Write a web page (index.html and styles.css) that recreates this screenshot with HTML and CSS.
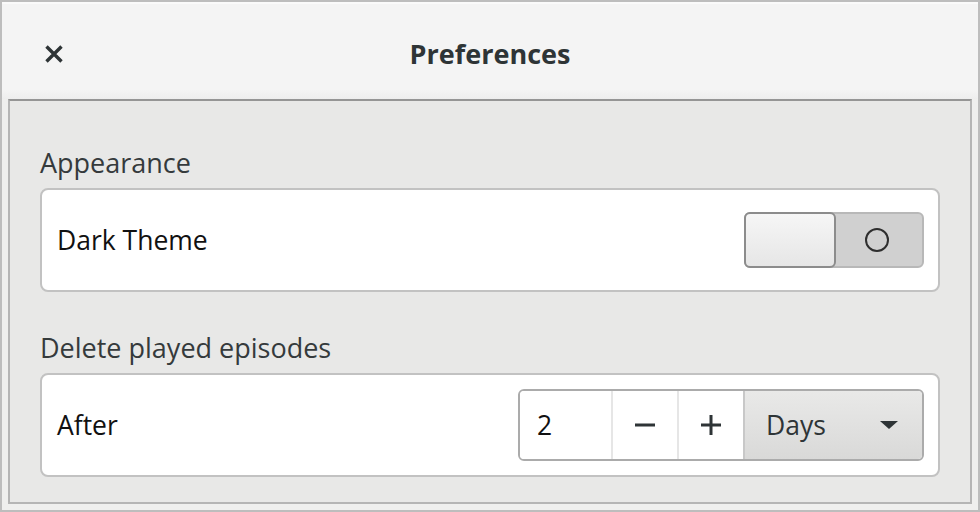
FILE: index.html
```html
<!DOCTYPE html>
<html>
<head>
<meta charset="utf-8">
<link rel="stylesheet" href="styles.css">
</head>
<body>
<div class="window">
  <header class="headerbar">
    <button class="close" aria-label="Close">
      <svg width="20" height="20" viewBox="0 0 20 20"><path d="M2.5 2.5 L17.5 17.5 M17.5 2.5 L2.5 17.5" stroke="#2e3436" stroke-width="3.4" stroke-linecap="butt" fill="none"/></svg>
    </button>
    <div class="title">Preferences</div>
  </header>
  <main class="frame">
    <section class="group">
      <h2 class="group-title">Appearance</h2>
      <div class="card">
        <span class="row-label">Dark Theme</span>
        <div class="switch">
          <div class="slider"></div>
          <div class="off-side"><span class="ring"></span></div>
        </div>
      </div>
    </section>
    <section class="group">
      <h2 class="group-title">Delete played episodes</h2>
      <div class="card">
        <span class="row-label">After</span>
        <div class="linked">
          <div class="spin-entry">2</div>
          <div class="spin-btn">
            <svg width="22" height="22" viewBox="0 0 22 22"><rect x="1" y="9.5" width="20" height="3" fill="#2e3436"/></svg>
          </div>
          <div class="spin-btn">
            <svg width="22" height="22" viewBox="0 0 22 22"><rect x="1" y="9.5" width="20" height="3" fill="#2e3436"/><rect x="9.5" y="1" width="3" height="20" fill="#2e3436"/></svg>
          </div>
          <div class="combo">
            <span>Days</span>
            <svg width="20" height="10" viewBox="0 0 20 10"><path d="M1 1 L19 1 L10 9 Z" fill="#2e3436"/></svg>
          </div>
        </div>
      </div>
    </section>
  </main>
</div>
</body>
</html>
```
FILE: styles.css
```css
* { box-sizing: border-box; }
html, body { margin: 0; padding: 0; }
body {
  width: 980px;
  height: 512px;
  font-family: "Open Sans", "Noto Sans", sans-serif;
  color: #2e3436;
  overflow: hidden;
}
.window {
  width: 980px;
  height: 512px;
  border: 2px solid #bdbdbd;
  background: #efefee;
  display: flex;
  flex-direction: column;
}
.headerbar {
  height: 97px;
  flex: none;
  display: flex;
  align-items: center;
  justify-content: center;
  position: relative;
  background: linear-gradient(#f4f4f4 0, #f4f4f4 86px, #ececec 97px);
  border-top: 2px solid #fafafa;
}
.close {
  position: absolute;
  left: 34px;
  top: 32px;
  width: 36px;
  height: 36px;
  border: none;
  background: transparent;
  padding: 0;
  display: flex;
  align-items: center;
  justify-content: center;
}
.title {
  font-weight: 700;
  font-size: 27px;
  color: #2e3436;
  margin-top: 4px;
}
.frame {
  margin: 0 6px;
  height: 405px;
  flex: none;
  background: #e8e8e7;
  border: 2px solid #b5b5b5;
  border-top-color: #959595;
  padding: 40px 30px 0;
  display: flex;
  flex-direction: column;
  gap: 34px;
}
.group-title {
  margin: 0 0 6px;
  padding-top: 3px;
  font-weight: 400;
  font-size: 27px;
  line-height: 38px;
  color: #353a3c;
}
.card {
  height: 104px;
  background: #fff;
  border: 2px solid #c2c2c2;
  border-radius: 8px;
  display: flex;
  align-items: center;
  justify-content: space-between;
  padding: 0 14px 0 15px;
}
.row-label {
  font-size: 26.5px;
  color: #111;
}
.switch {
  width: 180px;
  height: 56px;
  display: flex;
  border: 2px solid #b8b8b8;
  border-radius: 6px;
  background: #d0d0d0;
  position: relative;
}
.slider {
  width: 92px;
  margin: -2px 0 -2px -2px;
  border: 2px solid #8c8c8c;
  border-radius: 6px;
  background: linear-gradient(#f6f6f6, #e6e6e6);
}
.off-side {
  flex: 1;
  display: flex;
  align-items: center;
  justify-content: center;
  padding-right: 4px;
}
.ring {
  width: 24px;
  height: 24px;
  border: 2px solid #2e2e2e;
  border-radius: 50%;
}
.linked {
  display: flex;
  height: 72px;
  border: 2px solid #ababab;
  border-radius: 6px;
  overflow: hidden;
}
.spin-entry {
  width: 93px;
  background: #fff;
  border-right: 2px solid #e6e6e6;
  display: flex;
  align-items: center;
  padding-left: 17px;
  font-size: 26.5px;
  color: #111;
}
.spin-btn {
  width: 66px;
  background: #fff;
  border-right: 2px solid #e6e6e6;
  display: flex;
  align-items: center;
  justify-content: center;
}
.spin-btn:nth-of-type(3) { border-right: 2px solid #c8c8c8; }
.combo {
  width: 177px;
  background: linear-gradient(#e9e9e8, #d9d9d8);
  display: flex;
  align-items: center;
  justify-content: space-between;
  padding: 0 23px 0 21px;
  font-size: 26.5px;
  color: #2e3436;
}
```
